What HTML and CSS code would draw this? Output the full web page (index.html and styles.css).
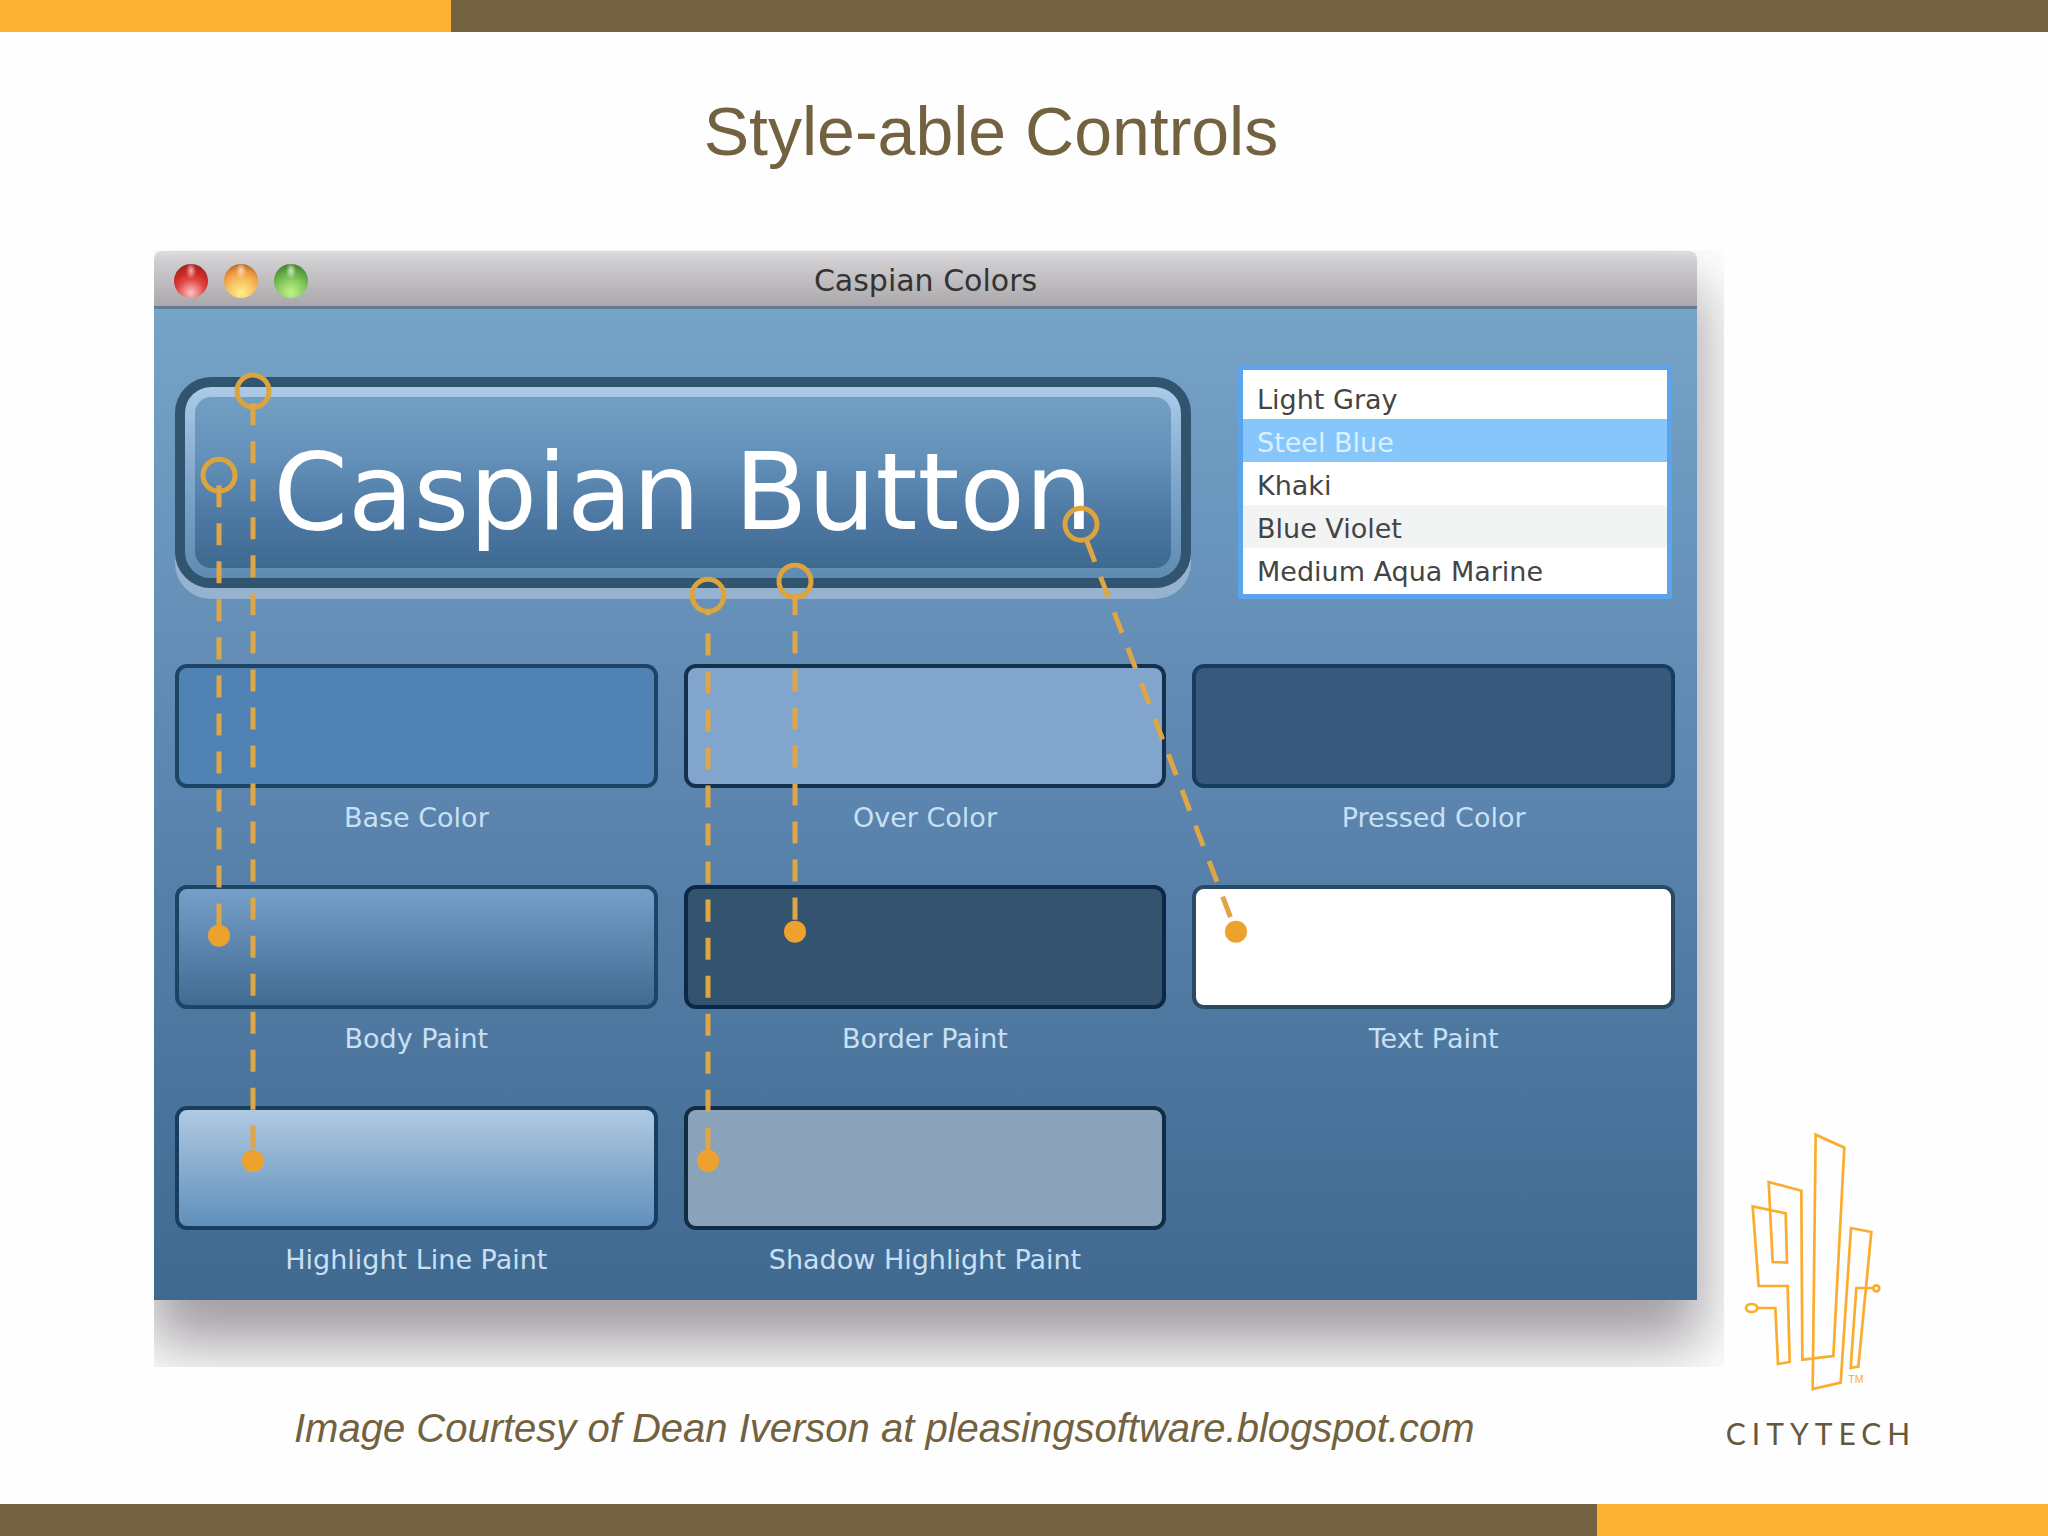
FILE: index.html
```html
<!DOCTYPE html>
<html lang="en">
<head>
  <meta charset="UTF-8" />
  <meta name="viewport" content="width=device-width, initial-scale=1.0"/>
  <title>Style-able Controls</title>
  <link rel="stylesheet" href="styles.css">
</head>
<body>
  <div class="bar bar-top"></div>

  <header>
    <h1>Style-able Controls</h1>
  </header>

  <main>
    <figure>
      <div class="shot">
        <div class="window">
          <div class="titlebar">
            <div class="lights">
              <button type="button" class="light red" aria-label="Close"></button>
              <button type="button" class="light yellow" aria-label="Minimize"></button>
              <button type="button" class="light green" aria-label="Zoom"></button>
            </div>
            <h2>Caspian Colors</h2>
          </div>

          <div class="content">
            <div class="controls">
              <button type="button" class="caspian-button"><span>Caspian Button</span></button>
              <select class="color-list" size="5" aria-label="Base color">
                <option>Light Gray</option>
                <option selected>Steel Blue</option>
                <option>Khaki</option>
                <option>Blue Violet</option>
                <option>Medium Aqua Marine</option>
              </select>
            </div>

            <div class="swatches">
              <div class="item"><div class="swatch base"></div><p>Base Color</p></div>
              <div class="item"><div class="swatch over"></div><p>Over Color</p></div>
              <div class="item"><div class="swatch pressed"></div><p>Pressed Color</p></div>
              <div class="item"><div class="swatch body-paint"></div><p>Body Paint</p></div>
              <div class="item"><div class="swatch border-paint"></div><p>Border Paint</p></div>
              <div class="item"><div class="swatch text-paint"></div><p>Text Paint</p></div>
              <div class="item"><div class="swatch highlight"></div><p>Highlight Line Paint</p></div>
              <div class="item"><div class="swatch shadow-highlight"></div><p>Shadow Highlight Paint</p></div>
            </div>
          </div>

          <!-- callouts from the button parts to their swatches -->
          <svg class="callouts" viewBox="154 251 1543 1048" preserveAspectRatio="none" aria-hidden="true">
            <g class="rings">
              <circle cx="253" cy="391" r="16"/>
              <circle cx="219" cy="475" r="16"/>
              <circle cx="708" cy="595" r="16"/>
              <circle cx="795" cy="581" r="16"/>
              <circle cx="1081" cy="524" r="16"/>
            </g>
            <g class="dashes">
              <path d="M253 403V1160"/>
              <path d="M219 485V935"/>
              <path d="M708 610v5M708 633V1160"/>
              <path d="M795 593V931"/>
              <path d="M1087 541L1236 931"/>
            </g>
            <g class="dots">
              <circle cx="253" cy="1160" r="11"/>
              <circle cx="219" cy="935" r="11"/>
              <circle cx="708" cy="1160" r="11"/>
              <circle cx="795" cy="931" r="11"/>
              <circle cx="1236" cy="931" r="11"/>
            </g>
          </svg>
        </div>
      </div>
      <figcaption>Image Courtesy of Dean Iverson at pleasingsoftware.blogspot.com</figcaption>
    </figure>

    <aside class="logo">
      <svg class="skyline" viewBox="190 90 420 792" aria-hidden="true">
        <path d="M234 621H287L295 789L330 783L324 555H237L219 316L318 337L322 485L279 483L267 243L365 269L368 776L461 765L494 140L408 101L399 864L483 845L514 381L575 393L536 797L513 801L530 561H580"/>
        <ellipse cx="216" cy="621" rx="17" ry="12"/>
        <circle cx="590" cy="562" r="9"/>
        <text x="506" y="845">TM</text>
      </svg>
      <span class="wordmark">CITYTECH</span>
    </aside>
  </main>

  <div class="bar bar-bottom"></div>
</body>
</html>
```

FILE: styles.css
```css
* {
  box-sizing: border-box;
}

body {
  margin: 0;
  min-height: 100vh;
  display: flex;
  flex-direction: column;
  background-color: #fefefe;
  color: #72623f;
  font-family: "Liberation Sans", Arial, sans-serif;
}

.bar {
  height: 32px;
}

.bar-top {
  background: linear-gradient(to right, #fdb135 22%, #736342 22%);
}

.bar-bottom {
  margin-top: auto;
  background: linear-gradient(to right, #736342 78%, #fdb135 78%);
}

header {
  padding: 60px 66px 80px 0;
}

h1 {
  margin: 0;
  font-size: 68px;
  line-height: 78px;
  font-weight: normal;
  text-align: center;
}

main {
  display: flex;
  align-items: flex-end;
  padding: 0 130px 0 154px;
}

figure {
  flex: 1;
  margin: 0;
}

figcaption {
  margin-top: 38px;
  padding-left: 140px;
  font-size: 40px;
  line-height: 46px;
  font-style: italic;
}

/* clips the window shadow */
.shot {
  overflow: hidden;
  padding: 1px 27px 67px 0;
}

.window {
  position: relative;
  border-radius: 8px 8px 0 0;
  box-shadow: 0 40px 60px 4px rgba(20, 10, 20, 0.4);
  font-family: "DejaVu Sans", Verdana, sans-serif;
}

.titlebar {
  display: grid;
  grid-template-columns: 1fr auto 1fr;
  align-items: center;
  height: 58px;
  padding: 5px 20px 0;
  border-bottom: 3px solid #637b93;
  border-radius: 8px 8px 0 0;
  background: linear-gradient(#dddcde, #cfcdd0 20%, #aaa8aa);
}

.titlebar h2 {
  margin: 0;
  font-size: 30px;
  line-height: 36px;
  font-weight: normal;
  color: #333;
}

.lights {
  display: flex;
  gap: 16px;
}

.light {
  width: 34px;
  height: 34px;
  padding: 0;
  border: 0;
  border-radius: 50%;
}

.red {
  background: radial-gradient(ellipse at 50% 20%, #f5b0a8, transparent 22%), radial-gradient(circle at 50% 85%, #ffc4c8, #e04848 40%, #d02a26 60%, #7c2226);
}

.yellow {
  background: radial-gradient(ellipse at 50% 20%, #fbd8b0, transparent 22%), radial-gradient(circle at 50% 85%, #fff08c, #f8c060 40%, #ee9840 65%, #8c4e1c);
}

.green {
  background: radial-gradient(ellipse at 50% 20%, #d0ecc0, transparent 22%), radial-gradient(circle at 50% 85%, #c0f48c, #88cc60 40%, #5fa845 65%, #2f6424);
}

.content {
  padding: 56px 22px 24px 21px;
  background: linear-gradient(#76a3c8, #5b84ae 50%, #406990);
}

.controls {
  display: flex;
  align-items: center;
  gap: 47px;
  margin-bottom: 65px;
  padding-right: 3px;
}

.caspian-button {
  flex: 1;
  height: 211px;
  padding: 10px;
  border: 10px solid #31546f;
  border-radius: 36px;
  background:
    linear-gradient(#739fc4, #6491b9 35%, #4c78a3 70%, #3e6a90) content-box,
    linear-gradient(#accbe8, #7fa6cb 50%, #5f8bb2) padding-box;
  box-shadow: 0 11px 0 #95b3ce;
  font-family: inherit;
  font-size: 107px;
  line-height: 124px;
  color: #fff;
}

.caspian-button span {
  display: block;
  padding-top: 20px;
}

.color-list {
  width: 434px;
  height: 234px;
  padding: 6px 0 3px;
  border: 5px solid #5ba3ea;
  border-radius: 2px;
  outline: none;
  overflow: hidden;
  background-color: #fff;
  font-family: inherit;
  font-size: 27px;
}

.color-list option {
  height: 43px;
  padding: 8px 14px 0;
  color: #444;
}

.color-list option:nth-child(even) {
  background-color: #f2f3f3;
}

.color-list option:checked {
  background: linear-gradient(#86c6fb, #86c6fb);
  color: #d8f0ff;
}

.swatches {
  display: grid;
  grid-template-columns: repeat(3, 1fr);
  gap: 51px 26px;
}

.swatch {
  height: 124px;
  border: 4px solid #1d4365;
  border-radius: 12px;
}

.item p {
  margin: 14px 0 0;
  font-size: 27px;
  line-height: 32px;
  text-align: center;
  color: #c9e0f4;
}

.base { background-color: #5082b4; }
.over { background-color: #81a5cc; border-color: #14304c; }
.pressed { background-color: #38597c; border-color: #163c5e; }
.body-paint { background: linear-gradient(#759fc9, #426b92); }
.border-paint { background-color: #33536f; border-color: #0c2846; }
.text-paint { background-color: #fff; border-color: #2a4a64; }
.highlight { background: linear-gradient(#b0cae2, #6090bb); border-color: #173e60; }
.shadow-highlight { background-color: #8aa3bb; border-color: #122c44; }

.callouts {
  position: absolute;
  top: 0;
  left: 0;
  width: 100%;
  height: 100%;
  pointer-events: none;
}

.rings {
  fill: none;
  stroke: #dca43c;
  stroke-width: 5;
}

.dashes {
  fill: none;
  stroke: #dfa645;
  stroke-width: 5;
  stroke-dasharray: 22 16;
}

.dots {
  fill: #eda22e;
}

.logo {
  display: flex;
  flex-direction: column;
  align-items: center;
  gap: 20px;
  width: 194px;
}

.skyline {
  width: 140px;
  height: 264px;
  margin-right: 16px;
  fill: none;
  stroke: #fbac2c;
  stroke-width: 8;
}

.skyline text {
  fill: #fbac2c;
  stroke: none;
  font-size: 32px;
}

.wordmark {
  font-family: Lato, sans-serif;
  font-size: 30px;
  line-height: 36px;
  letter-spacing: 6px;
  color: #65583c;
}
```
